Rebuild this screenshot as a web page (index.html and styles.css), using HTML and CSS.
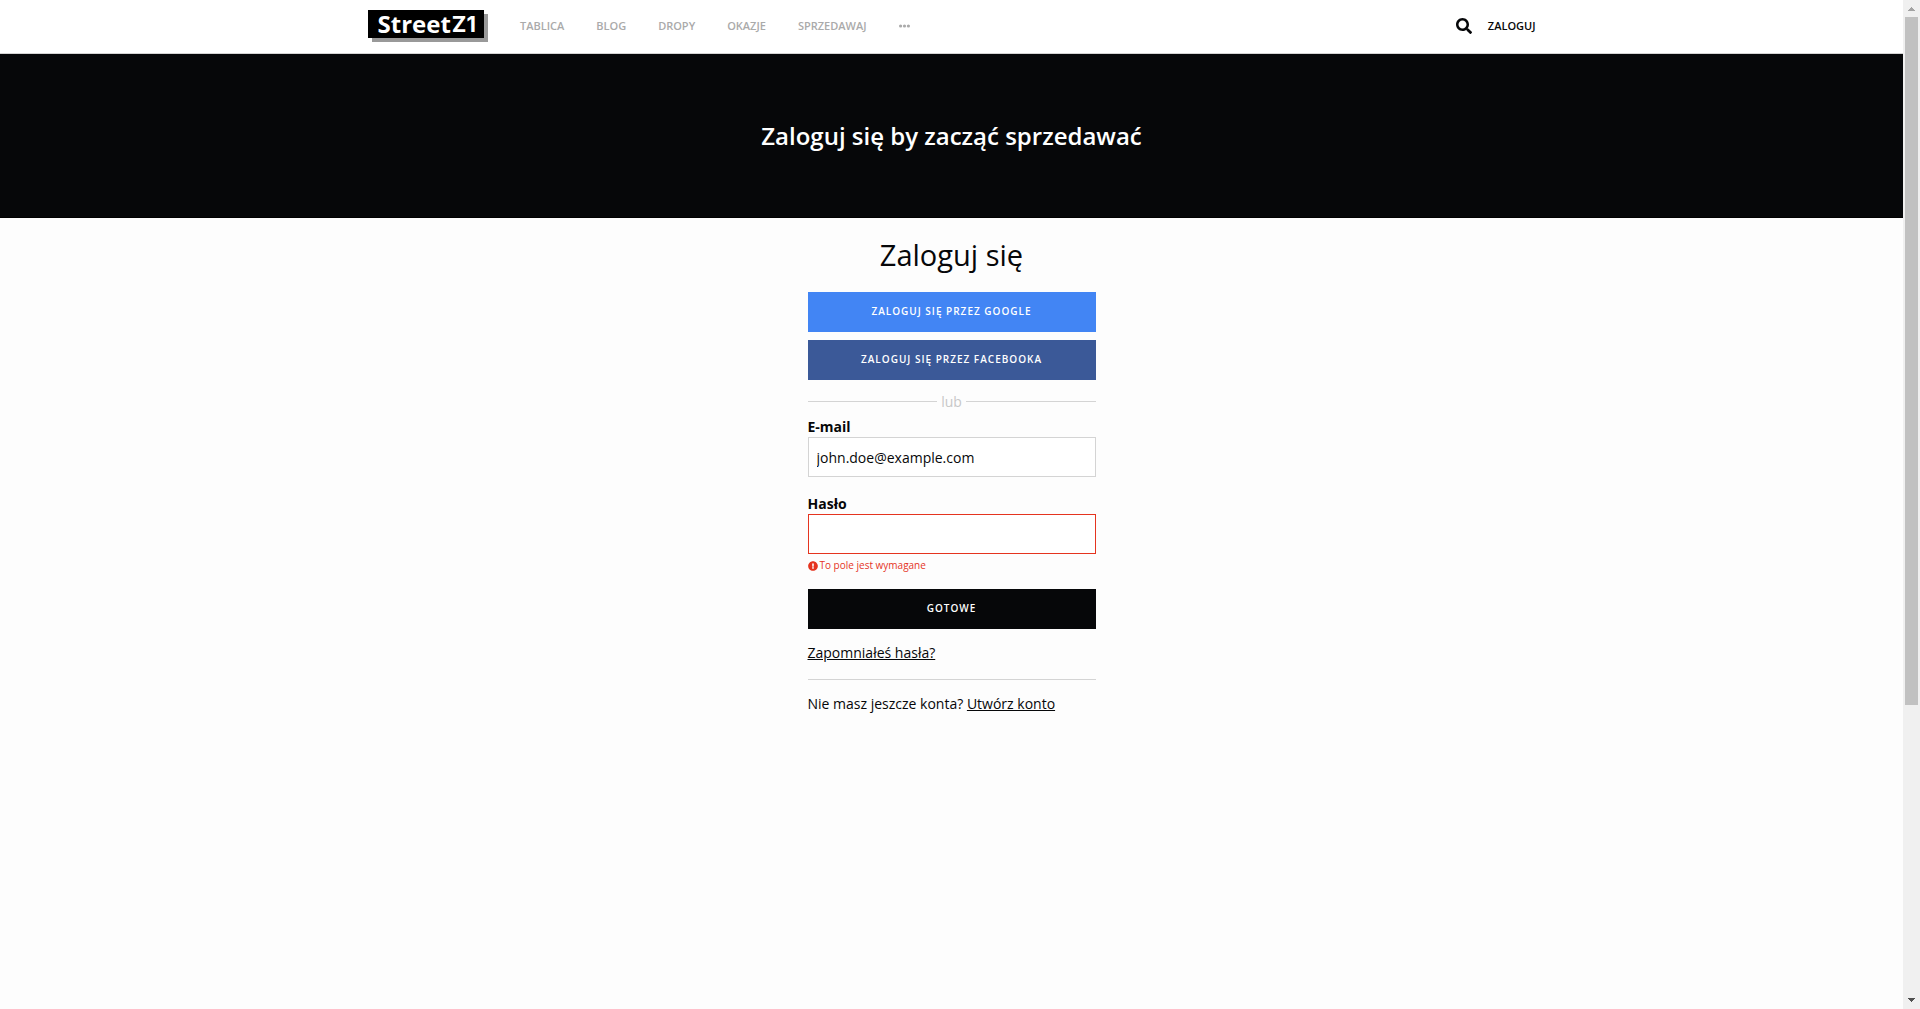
FILE: index.html
```html
<!DOCTYPE html>
<html lang="pl">
<head>
<meta charset="utf-8">
<meta name="viewport" content="width=device-width, initial-scale=1">
<title>StreetZ1 – Zaloguj się</title>
<link rel="stylesheet" href="styles.css">
</head>
<body>
<div class="page">
  <header class="topbar">
    <div class="topbar-inner">
      <a class="logo" href="#">Street<span class="logo-mark">Z1</span></a>
      <nav class="nav">
        <a href="#">TABLICA</a>
        <a href="#">BLOG</a>
        <a href="#">DROPY</a>
        <a href="#">OKAZJE</a>
        <a href="#">SPRZEDAWAJ</a>
        <button class="more" type="button" aria-label="Więcej">
          <svg width="11" height="4" viewBox="0 0 11 4" fill="currentColor"><circle cx="1.6" cy="2" r="1.6"/><circle cx="5.5" cy="2" r="1.6"/><circle cx="9.4" cy="2" r="1.6"/></svg>
        </button>
      </nav>
      <div class="account">
        <button class="search" type="button" aria-label="Szukaj">
          <svg width="16" height="16" viewBox="0 0 512 512" fill="currentColor"><path d="M505 442.700L405.300 343c-4.500-4.500-10.600-7-17-7H372c27.600-35.300 44-79.700 44-128C416 93.100 322.900 0 208 0S0 93.100 0 208s93.100 208 208 208c48.300 0 92.700-16.400 128-44v16.300c0 6.400 2.500 12.500 7 17l99.700 99.700c9.400 9.400 24.600 9.400 33.900 0l28.300-28.300c9.400-9.400 9.400-24.600.1-34zM208 336c-70.700 0-128-57.200-128-128 0-70.700 57.200-128 128-128 70.700 0 128 57.200 128 128 0 70.700-57.200 128-128 128z"/></svg>
        </button>
        <a class="login-link" href="#">ZALOGUJ</a>
      </div>
    </div>
  </header>

  <section class="banner"><p>Zaloguj się by zacząć sprzedawać</p></section>

  <main class="login">
    <h1>Zaloguj się</h1>
    <div class="social">
      <button class="button google" type="button">ZALOGUJ SIĘ PRZEZ GOOGLE</button>
      <button class="button facebook" type="button">ZALOGUJ SIĘ PRZEZ FACEBOOKA</button>
    </div>
    <div class="divider">lub</div>
    <form novalidate>
      <div class="field">
        <label for="email">E-mail</label>
        <input id="email" type="email" value="john.doe@example.com">
      </div>
      <div class="field">
        <label for="password">Hasło</label>
        <input class="invalid" id="password" type="password" aria-describedby="password-error">
        <p class="error" id="password-error">
          <svg width="10" height="10" viewBox="0 0 512 512" fill="currentColor"><path d="M504 256c0 137-111 248-248 248S8 393 8 256 119 8 256 8s248 111 248 248zm-248 50c-25.400 0-46 20.600-46 46s20.600 46 46 46 46-20.600 46-46-20.600-46-46-46zm-43.700-165.300l7.400 136c.3 6.400 5.600 11.300 12 11.300h48.500c6.400 0 11.600-5 12-11.300l7.400-136c.4-6.900-5.100-12.700-12-12.700h-63.400c-6.900 0-12.300 5.800-11.900 12.700z"/></svg>
          To pole jest wymagane
        </p>
      </div>
      <button class="button submit" type="submit">GOTOWE</button>
    </form>
    <p class="forgot"><a href="#">Zapomniałeś hasła?</a></p>
    <p class="register">Nie masz jeszcze konta? <a href="#">Utwórz konto</a></p>
  </main>
</div>
<div class="scrollbar" aria-hidden="true">
  <svg class="arrow" width="17" height="17" viewBox="0 0 17 17" fill="#a3a3a3" shape-rendering="crispEdges"><path d="M8 7h1v1h1v1h1v1h1v1H5v-1h1V9h1V8h1z"/></svg>
  <div class="track"><div class="thumb"></div><div class="rest"></div></div>
  <svg class="arrow" width="17" height="17" viewBox="0 0 17 17" fill="#505050" shape-rendering="crispEdges"><path d="M5 6h7v1h-1v1h-1v1H9v1H8V9H7V8H6V7H5z"/></svg>
</div>
</body>
</html>
```
FILE: styles.css
```css
* {
  box-sizing: border-box;
}

body {
  display: flex;
  min-height: 100vh;
  margin: 0;
  background: #fdfdfd;
  color: #060709;
  font-family: "Open Sans", sans-serif;
  font-size: 14px;
  line-height: 20px;
}

a {
  color: inherit;
}

p,
h1 {
  margin: 0;
}

button,
input {
  font: inherit;
}

svg {
  display: block;
}

.page {
  flex: 1;
  min-width: 0;
}

/* Top bar */
.topbar {
  background: #fff;
  border-bottom: 1px solid #d4d4d4;
}

.topbar-inner {
  display: flex;
  align-items: center;
  max-width: 1200px;
  height: 53px;
  margin: 0 auto;
  padding: 0 16px 2px;
}

.logo {
  display: flex;
  gap: 1px;
  margin: 0 36px 4px 0;
  padding: 0 8px 0 10px;
  background: #000;
  box-shadow: 4px 4px 0 #999;
  color: #fff;
  font-size: 24px;
  font-weight: 700;
  line-height: 28px;
  text-decoration: none;
}

.logo-mark {
  font-family: Inter, sans-serif;
  font-size: 22px;
}

.nav {
  display: flex;
  flex: 1;
  align-items: center;
  gap: 32px;
  color: #aaa;
  font-size: 11px;
  font-weight: 600;
}

.nav a,
.login-link {
  text-decoration: none;
}

.more,
.search {
  padding: 0;
  border: 0;
  background: none;
  color: inherit;
}

.account {
  display: flex;
  align-items: center;
  gap: 16px;
  font-size: 11px;
  font-weight: 600;
}

/* Banner */
.banner {
  padding: 64px 16px;
  border-bottom: 1px solid #000;
  background: #060709;
  color: #fff;
  font-size: 24px;
  font-weight: 600;
  line-height: 35px;
  text-align: center;
}

/* Login column */
.login {
  max-width: 288px;
  margin: 0 auto;
  padding: 16px 0;
}

h1 {
  margin-bottom: 16px;
  font-size: 29px;
  font-weight: 500;
  line-height: 42px;
  text-align: center;
}

.social {
  display: grid;
  gap: 8px;
}

.button {
  display: block;
  width: 100%;
  height: 40px;
  padding: 0 0 2px;
  border: 0;
  color: #fff;
  font-size: 10px;
  font-weight: 600;
  letter-spacing: 1px;
}

.google {
  background: #4285f4;
}

.facebook {
  background: #3b5998;
}

.submit {
  background: #060709;
}

.divider {
  display: flex;
  align-items: center;
  gap: 4px;
  margin: 12px 0 4px;
  color: #c8c8c8;
}

.divider::before,
.divider::after {
  flex: 1;
  height: 2px;
  border-top: 1px solid #d4d4d4;
  content: "";
}

.field {
  margin-bottom: 16px;
}

.field label {
  display: block;
  font-weight: 700;
  line-height: 21px;
}

.field input {
  display: block;
  width: 100%;
  height: 40px;
  padding: 0 8px;
  border: 1px solid #d4d4d4;
  border-radius: 0;
  background: #fff;
  color: #060709;
}

.field .invalid {
  border-color: #e5341f;
}

.error {
  display: flex;
  align-items: center;
  gap: 2px;
  margin-top: 4px;
  color: #e5341f;
  font-size: 10px;
  line-height: 15px;
}

.forgot {
  padding: 14px 0 16px;
  border-bottom: 1px solid #d4d4d4;
}

.register {
  padding-top: 14px;
}

/* Scroll bar */
.scrollbar {
  display: flex;
  flex-direction: column;
  width: 17px;
  background: #f0f0f0;
}

.track {
  display: flex;
  flex: 1;
  flex-direction: column;
  padding: 0 2px;
}

.thumb {
  flex: 12;
  background: #c1c1c1;
}

.rest {
  flex: 5;
}
```
